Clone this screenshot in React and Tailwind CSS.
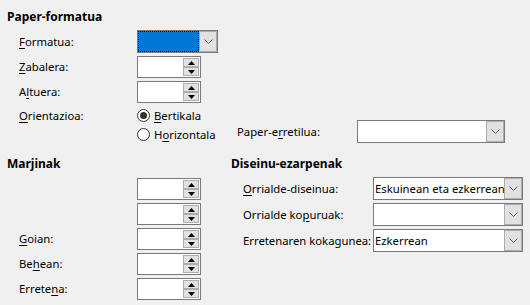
const Key = ({ children }) => <u className="underline underline-offset-[2px]">{children}</u>;

const SpinArrow = ({ up }) => (
  <svg width="7" height="4" viewBox="0 0 7 4" className="block">
    {up ? <path d="M0 4 L3.5 0 L7 4 Z" fill="#000" /> : <path d="M0 0 L3.5 4 L7 0 Z" fill="#000" />}
  </svg>
);

const SpinBox = () => (
  <div className="w-[64px] h-[22px] border border-[#7a7a7a] bg-white flex justify-end p-[1px]">
    <div className="w-[16px] h-full flex flex-col">
      <div className="flex-1 border border-[#adadad] bg-[#e1e1e1] flex items-center justify-center">
        <SpinArrow up />
      </div>
      <div className="flex-1 border border-[#adadad] bg-[#e1e1e1] flex items-center justify-center">
        <SpinArrow />
      </div>
    </div>
  </div>
);

const Chevron = () => (
  <svg width="9" height="5" viewBox="0 0 9 5" className="block">
    <path d="M0.5 0.5 L4.5 4.5 L8.5 0.5" fill="none" stroke="#606060" strokeWidth="1" />
  </svg>
);

const Dropdown = ({ width, value, selected }) => (
  <div className={"h-[23px] border border-[#7a7a7a] bg-white flex " + width}>
    {selected ? (
      <div className="flex-1 bg-[#0078d7] border border-dotted border-black" />
    ) : (
      <div className="flex-1 flex items-center pl-[1px] overflow-hidden whitespace-nowrap">{value}</div>
    )}
    <div className="w-[18px] h-full border border-[#adadad] bg-[#e1e1e1] flex items-center justify-center">
      <Chevron />
    </div>
  </div>
);

const Radio = ({ checked, children }) => (
  <div className="h-[19px] flex items-center gap-[4px]">
    <div className="w-[13px] h-[13px] rounded-full border border-[#333] bg-white flex items-center justify-center">
      {checked && <div className="w-[7px] h-[7px] rounded-full bg-[#333]" />}
    </div>
    <span>{children}</span>
  </div>
);

const Row = ({ label, h = "h-[22px]", children }) => (
  <div className={"flex items-center " + h}>
    <div className="w-[118px] shrink-0">{label}</div>
    {children}
  </div>
);

export default function App() {
  return (
    <div
      className="w-[530px] h-[305px] bg-[#f0f0f0] text-[11.3px] text-black leading-[16px] pl-[7px] pt-[9px] overflow-hidden"
      style={{ fontFamily: '"Noto Sans", sans-serif' }}
    >
      {/* Paper format */}
      <h2 className="font-bold text-[12px] h-[16px]">Paper-formatua</h2>
      <div className="pl-[12px] mt-[5px] flex flex-col gap-[3px]">
        <Row label={<><Key>F</Key>ormatua:</>} h="h-[23px]">
          <Dropdown width="w-[81px]" selected />
        </Row>
        <Row label={<><Key>Z</Key>abalera:</>}>
          <SpinBox />
        </Row>
        <Row label={<>A<Key>l</Key>tuera:</>}>
          <SpinBox />
        </Row>
        <div className="flex items-start">
          <div className="w-[118px] shrink-0 h-[19px] flex items-center"><span><Key>O</Key>rientazioa:</span></div>
          <div className="w-[100px] shrink-0 flex flex-col">
            <Radio checked><Key>B</Key>ertikala</Radio>
            <Radio>H<Key>o</Key>rizontala</Radio>
          </div>
          <div className="flex items-center self-end mb-[1px]">
            <div className="w-[120px] shrink-0">Paper-e<Key>r</Key>retilua:</div>
            <Dropdown width="w-[148px]" />
          </div>
        </div>
      </div>

      {/* Bottom sections */}
      <div className="flex mt-[12px]">
        <div className="w-[224px] shrink-0">
          <h2 className="font-bold text-[12px] h-[16px]">Marjinak</h2>
          <div className="pl-[12px] mt-[6px] flex flex-col gap-[3px]">
            <Row label="">
              <SpinBox />
            </Row>
            <Row label="">
              <SpinBox />
            </Row>
            <Row label={<><Key>G</Key>oian:</>}>
              <SpinBox />
            </Row>
            <Row label={<>Be<Key>h</Key>ean:</>}>
              <SpinBox />
            </Row>
            <Row label={<>Errete<Key>n</Key>a:</>}>
              <SpinBox />
            </Row>
          </div>
        </div>
        <div className="flex-1">
          <h2 className="font-bold text-[12px] h-[16px]">Diseinu-ezarpenak</h2>
          <div className="pl-[12px] mt-[5px] flex flex-col gap-[3px]">
            <div className="flex items-center h-[23px]">
              <div className="w-[130px] shrink-0"><Key>O</Key>rrialde-diseinua:</div>
              <Dropdown width="w-[150px]" value="Eskuinean eta ezkerrean" />
            </div>
            <div className="flex items-center h-[23px]">
              <div className="w-[130px] shrink-0">Orrialde ko<Key>p</Key>uruak:</div>
              <Dropdown width="w-[150px]" />
            </div>
            <div className="flex items-center h-[23px]">
              <div className="w-[130px] shrink-0 whitespace-nowrap">Erretenaren kokagunea:</div>
              <Dropdown width="w-[150px]" value="Ezkerrean" />
            </div>
          </div>
        </div>
      </div>
    </div>
  );
}
